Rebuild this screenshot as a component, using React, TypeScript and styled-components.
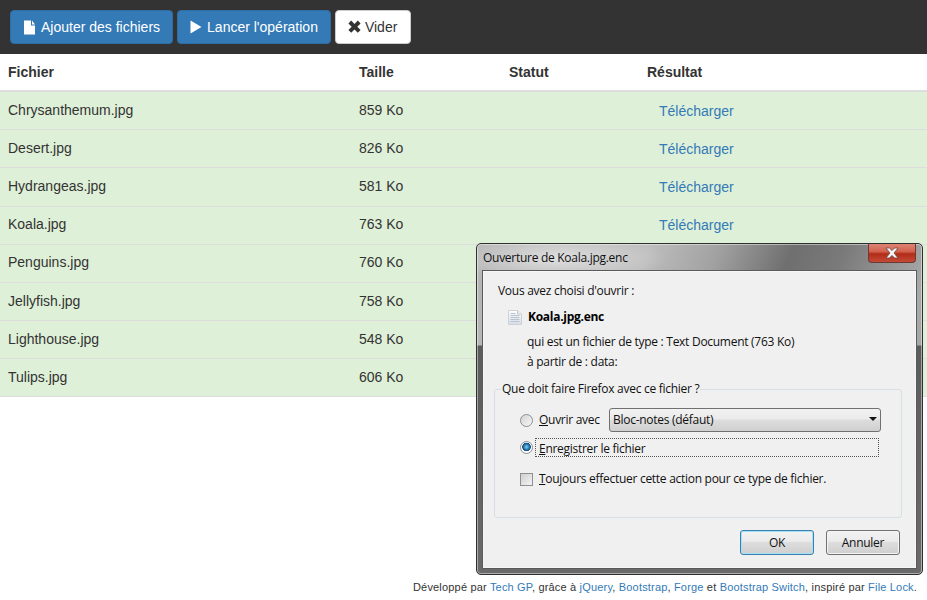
import React from "react";
import styled, { createGlobalStyle } from "styled-components";

// height and top follow the rounding of the rows in the original table
const files = [
  { name: "Chrysanthemum.jpg", size: "859 Ko", height: 38, top: 8 },
  { name: "Desert.jpg", size: "826 Ko", height: 38, top: 8 },
  { name: "Hydrangeas.jpg", size: "581 Ko", height: 39, top: 8 },
  { name: "Koala.jpg", size: "763 Ko", height: 38, top: 7 },
  { name: "Penguins.jpg", size: "760 Ko", height: 38, top: 7 },
  { name: "Jellyfish.jpg", size: "758 Ko", height: 38, top: 8 },
  { name: "Lighthouse.jpg", size: "548 Ko", height: 38, top: 8 },
  { name: "Tulips.jpg", size: "606 Ko", height: 38, top: 8 },
];

const FileIcon = () => (
  <svg width="13" height="15" viewBox="0 0 13 15">
    <path d="M1 0.5h7v5h4v9H1z M9 0.5l3 4H9z" fill="currentColor" />
  </svg>
);

const PlayIcon = () => (
  <svg width="12" height="14" viewBox="0 0 12 14">
    <path d="M0.5 0.5l11 6.5-11 6.5z" fill="currentColor" />
  </svg>
);

const RemoveIcon = () => (
  <svg width="13" height="14" viewBox="0 0 13 14">
    <path d="M0.4 3.4l2.8-2.8 3.3 3.3 3.3-3.3 2.8 2.8-3.3 3.3 3.3 3.3-2.8 2.8-3.3-3.3-3.3 3.3-2.8-2.8 3.3-3.3z" fill="currentColor" />
  </svg>
);

const DocIcon = () => (
  <svg width="14" height="15" viewBox="0 0 14 15">
    <defs>
      <linearGradient id="docFill" x1="0" y1="0" x2="0" y2="1">
        <stop offset="0" stopColor="#ffffff" />
        <stop offset="1" stopColor="#d5dde6" />
      </linearGradient>
    </defs>
    <path d="M.5.5h9l4 3.5v10.5H.5z" fill="url(#docFill)" stroke="#cdd2d8" />
    <path d="M9.5.5v3.5h4" fill="#eef1f4" stroke="#c4c9cf" />
    <path d="M2.5 3.5h5M2.5 5.5h9M2.5 7.5h9M2.5 9.5h9M2.5 11.5h9" stroke="#b9c2cd" />
  </svg>
);

export default function App() {
  return (
    <>
      <GlobalStyles />
      <Page>
        <Toolbar>
          <ActionButton $primary>
            <FileIcon />
            Ajouter des fichiers
          </ActionButton>
          <ActionButton $primary>
            <PlayIcon />
            Lancer l'opération
          </ActionButton>
          <ClearButton>
            <RemoveIcon />
            Vider
          </ClearButton>
        </Toolbar>
        <FileTable>
          <colgroup>
            <col width="351" />
            <col width="150" />
            <col width="138" />
            <col width="288" />
          </colgroup>
          <thead>
            <tr>
              <HeadCell>Fichier</HeadCell>
              <HeadCell>Taille</HeadCell>
              <HeadCell>Statut</HeadCell>
              <HeadCell>Résultat</HeadCell>
            </tr>
          </thead>
          <tbody>
            {files.map((file) => (
              <FileRow key={file.name} $height={file.height}>
                <Cell $top={file.top}>{file.name}</Cell>
                <Cell $top={file.top}>{file.size}</Cell>
                <Cell $top={file.top} />
                <Cell $top={file.top}>
                  <DownloadLink href="#">Télécharger</DownloadLink>
                </Cell>
              </FileRow>
            ))}
          </tbody>
        </FileTable>
        <Footer>
          Développé par <a href="#">Tech GP</a>, grâce à <a href="#">jQuery</a>,{" "}
          <a href="#">Bootstrap</a>, <a href="#">Forge</a> et{" "}
          <a href="#">Bootstrap Switch</a>, inspiré par <a href="#">File Lock</a>.
        </Footer>
      </Page>

      <Dialog>
        <TitleBar>
          <Title>Ouverture de Koala.jpg.enc</Title>
          <CloseButton>
            <svg width="16" height="12" viewBox="0 0 16 12">
              <path
                d="M2 1h3.4L8 3.6 10.6 1H14l-4 5 4 5h-3.4L8 8.4 5.4 11H2l4-5z"
                fill="#f4f6f8"
                stroke="#6d4a4a"
                strokeWidth="0.8"
              />
            </svg>
          </CloseButton>
        </TitleBar>
        <Panel>
          <Intro>Vous avez choisi d'ouvrir :</Intro>
          <FileName>
            <DocIcon />
            Koala.jpg.enc
          </FileName>
          <Meta>qui est un fichier de type : Text Document (763 Ko)</Meta>
          <Meta>à partir de : data:</Meta>
          <Group>
            <Legend>Que doit faire Firefox avec ce fichier ?</Legend>
            <OptionRow>
              <Radio />
              <OptionLabel $width="60px">
                <u>O</u>uvrir avec
              </OptionLabel>
              <AppSelect>
                Bloc-notes (défaut)
                <Caret />
              </AppSelect>
            </OptionRow>
            <OptionRow $tight>
              <Radio $checked />
              <FocusLabel>
                <u>E</u>nregistrer le fichier
              </FocusLabel>
            </OptionRow>
            <AlwaysRow>
              <Checkbox />
              <OptionLabel>
                <u>T</u>oujours effectuer cette action pour ce type de fichier.
              </OptionLabel>
            </AlwaysRow>
          </Group>
          <DialogActions>
            <SystemButton $default>OK</SystemButton>
            <SystemButton>Annuler</SystemButton>
          </DialogActions>
        </Panel>
      </Dialog>
    </>
  );
}

const GlobalStyles = createGlobalStyle`
  html, body {
    margin: 0;
    padding: 0;
    background: #fff;
  }
  body {
    font-family: "Liberation Sans", Arial, sans-serif;
    font-size: 14px;
    line-height: 20px;
    color: #333;
    overflow: hidden;
  }
`;

const Page = styled.div`
  display: flex;
  flex-direction: column;
  height: 600px;
`;

const Toolbar = styled.div`
  display: flex;
  gap: 4px;
  height: 54px;
  box-sizing: border-box;
  padding: 10px;
  background: #333;
`;

const ActionButton = styled.button<{ $primary?: boolean }>`
  display: flex;
  align-items: center;
  gap: 5px;
  height: 34px;
  padding: 0 12px;
  border: 1px solid ${(p) => (p.$primary ? "#2e6da4" : "#ccc")};
  border-radius: 4px;
  background: ${(p) => (p.$primary ? "#337ab7" : "#fff")};
  color: ${(p) => (p.$primary ? "#fff" : "#333")};
  font: 14px/20px "Liberation Sans", Arial, sans-serif;
  white-space: nowrap;
`;

const ClearButton = styled(ActionButton)`
  gap: 4px;
  padding-right: 13px;
`;

const FileTable = styled.table`
  width: 927px;
  table-layout: fixed;
  border-collapse: collapse;
`;

const HeadCell = styled.th`
  height: 20px;
  padding: 8px;
  border-bottom: 2px solid #ddd;
  font-weight: bold;
  text-align: left;
  line-height: 20px;
`;

const FileRow = styled.tr<{ $height: number }>`
  height: ${(p) => p.$height}px;
  background: #dff0d8;
`;

const Cell = styled.td<{ $top: number }>`
  padding: ${(p) => p.$top}px 8px 0;
  border-bottom: 1px solid #ddd;
  line-height: 20px;
  vertical-align: top;
`;

const DownloadLink = styled.a`
  display: inline-block;
  padding: 1px 12px 0;
  color: #337ab7;
  text-decoration: none;
`;

const Footer = styled.footer`
  margin-top: auto;
  padding: 0 10px 4px 0;
  text-align: right;
  font-size: 11px;
  line-height: 18px;
  letter-spacing: 0.18px;
  color: #333;

  a {
    color: #337ab7;
    text-decoration: none;
  }
`;

const Dialog = styled.div`
  position: absolute;
  left: 476px;
  top: 243px;
  width: 447px;
  height: 332px;
  box-sizing: border-box;
  display: flex;
  flex-direction: column;
  padding: 0 6px 6px;
  border: 1px solid #2f2f2f;
  border-radius: 5px;
  box-shadow: inset 0 0 0 1px rgba(255, 255, 255, 0.45);
  background:
    linear-gradient(180deg, rgba(0, 0, 0, 0) 0, rgba(0, 0, 0, 0) 101px, #5c5c5c 102px, #6a6a6a 100%),
    radial-gradient(110px 24px at 80px 14px, rgba(255, 255, 255, 0.55), rgba(255, 255, 255, 0)),
    linear-gradient(112deg, #b4b4b4 0, #bdbdbd 30%, #a2a2a2 42%, #6f6f6f 55%, #7a7a7a 64%, #a9a9a9 80%, #9a9a9a 100%);
  font-family: "Open Sans", "Noto Sans", sans-serif;
  font-size: 12px;
  line-height: 16px;
  letter-spacing: -0.28px;
  color: #111;
`;

const TitleBar = styled.div`
  display: flex;
  justify-content: space-between;
  align-items: flex-start;
  height: 27px;
  flex: none;
`;

const Title = styled.div`
  padding-top: 6px;
  color: #111;
`;

const CloseButton = styled.div`
  display: flex;
  align-items: center;
  justify-content: center;
  width: 48px;
  height: 19px;
  border: 1px solid #6b3a34;
  border-top: 0;
  border-radius: 0 0 4px 4px;
  box-sizing: border-box;
  background: linear-gradient(180deg, #dd8474 0, #d2614e 42%, #b22c18 55%, #c54a38 100%);
`;

const Panel = styled.div`
  flex: 1;
  display: flex;
  flex-direction: column;
  padding: 11px 13px 12px 14px;
  border: 1px solid #f7f7f7;
  outline: 1px solid #5a5a5a;
  background: #f0f0f0;
`;

const Intro = styled.div`
  margin-bottom: 10px;
`;

const FileName = styled.div`
  display: flex;
  align-items: center;
  gap: 6px;
  margin: 0 0 9px 10px;
  font-weight: bold;
  color: #000;
`;

const Meta = styled.div`
  margin: 0 0 4px 29px;
`;

const Group = styled.fieldset`
  min-width: 0;
  height: 137px;
  box-sizing: border-box;
  margin: 7px 0 0 -4px;
  padding: 11px 20px 0 25px;
  border: 1px solid #d5dfe5;
  border-radius: 3px;
`;

const Legend = styled.legend`
  padding: 0 1px;
  margin-left: -19px;
  color: #111;
`;

const OptionRow = styled.div<{ $tight?: boolean }>`
  display: flex;
  align-items: center;
  gap: 5px;
  height: ${(p) => (p.$tight ? "20px" : "24px")};
  margin-bottom: ${(p) => (p.$tight ? "12px" : "5px")};
`;

const AlwaysRow = styled.div`
  display: flex;
  align-items: center;
  gap: 5px;
  height: 20px;
`;

const OptionLabel = styled.span<{ $width?: string }>`
  width: ${(p) => p.$width ?? "auto"};
  flex: none;
  white-space: nowrap;
`;

const FocusLabel = styled.span`
  flex: 1;
  height: 19px;
  box-sizing: border-box;
  margin: 0 2px 0 -4px;
  padding: 2px 3px 0;
  border: 1px dotted #555;
`;

const Radio = styled.span<{ $checked?: boolean }>`
  flex: none;
  width: 13px;
  height: 13px;
  box-sizing: border-box;
  margin-right: 1px;
  border: 1px solid #8a8f94;
  border-radius: 50%;
  background: ${(p) =>
    p.$checked
      ? "radial-gradient(circle at 50% 45%, #7fd0f2 0, #1f6fa8 3px, #0f4d7d 4px, #fff 4.6px)"
      : "linear-gradient(135deg, #d4d4d4, #f6f6f6)"};
`;

const Checkbox = styled.span`
  flex: none;
  width: 13px;
  height: 13px;
  box-sizing: border-box;
  margin-right: 1px;
  border: 1px solid #8e8f8f;
  background: linear-gradient(135deg, #cfcfcf, #f4f4f4);
`;

const AppSelect = styled.div`
  position: relative;
  flex: none;
  width: 272px;
  height: 24px;
  box-sizing: border-box;
  margin-left: 5px;
  padding: 3px;
  border: 1px solid #707070;
  border-radius: 3px;
  background: linear-gradient(180deg, #f2f2f2 0, #ebebeb 45%, #dddddd 50%, #cfcfcf 100%);
`;

const Caret = styled.span`
  position: absolute;
  right: 3px;
  top: 8px;
  border-left: 4px solid transparent;
  border-right: 4px solid transparent;
  border-top: 4px solid #111;
`;

const DialogActions = styled.div`
  display: flex;
  justify-content: flex-end;
  gap: 12px;
  margin: 12px 2px 0 0;
`;

const SystemButton = styled.div<{ $default?: boolean }>`
  width: 74px;
  height: 25px;
  box-sizing: border-box;
  display: flex;
  align-items: center;
  justify-content: center;
  padding-top: 1px;
  border: 1px solid ${(p) => (p.$default ? "#3c7fb1" : "#707070")};
  border-radius: 3px;
  box-shadow: inset 0 0 0 1px ${(p) => (p.$default ? "#a5e0f5" : "#f5f5f5")};
  background: linear-gradient(180deg, #f2f2f2 0, #ebebeb 45%, #dddddd 50%, #cfcfcf 100%);
`;
